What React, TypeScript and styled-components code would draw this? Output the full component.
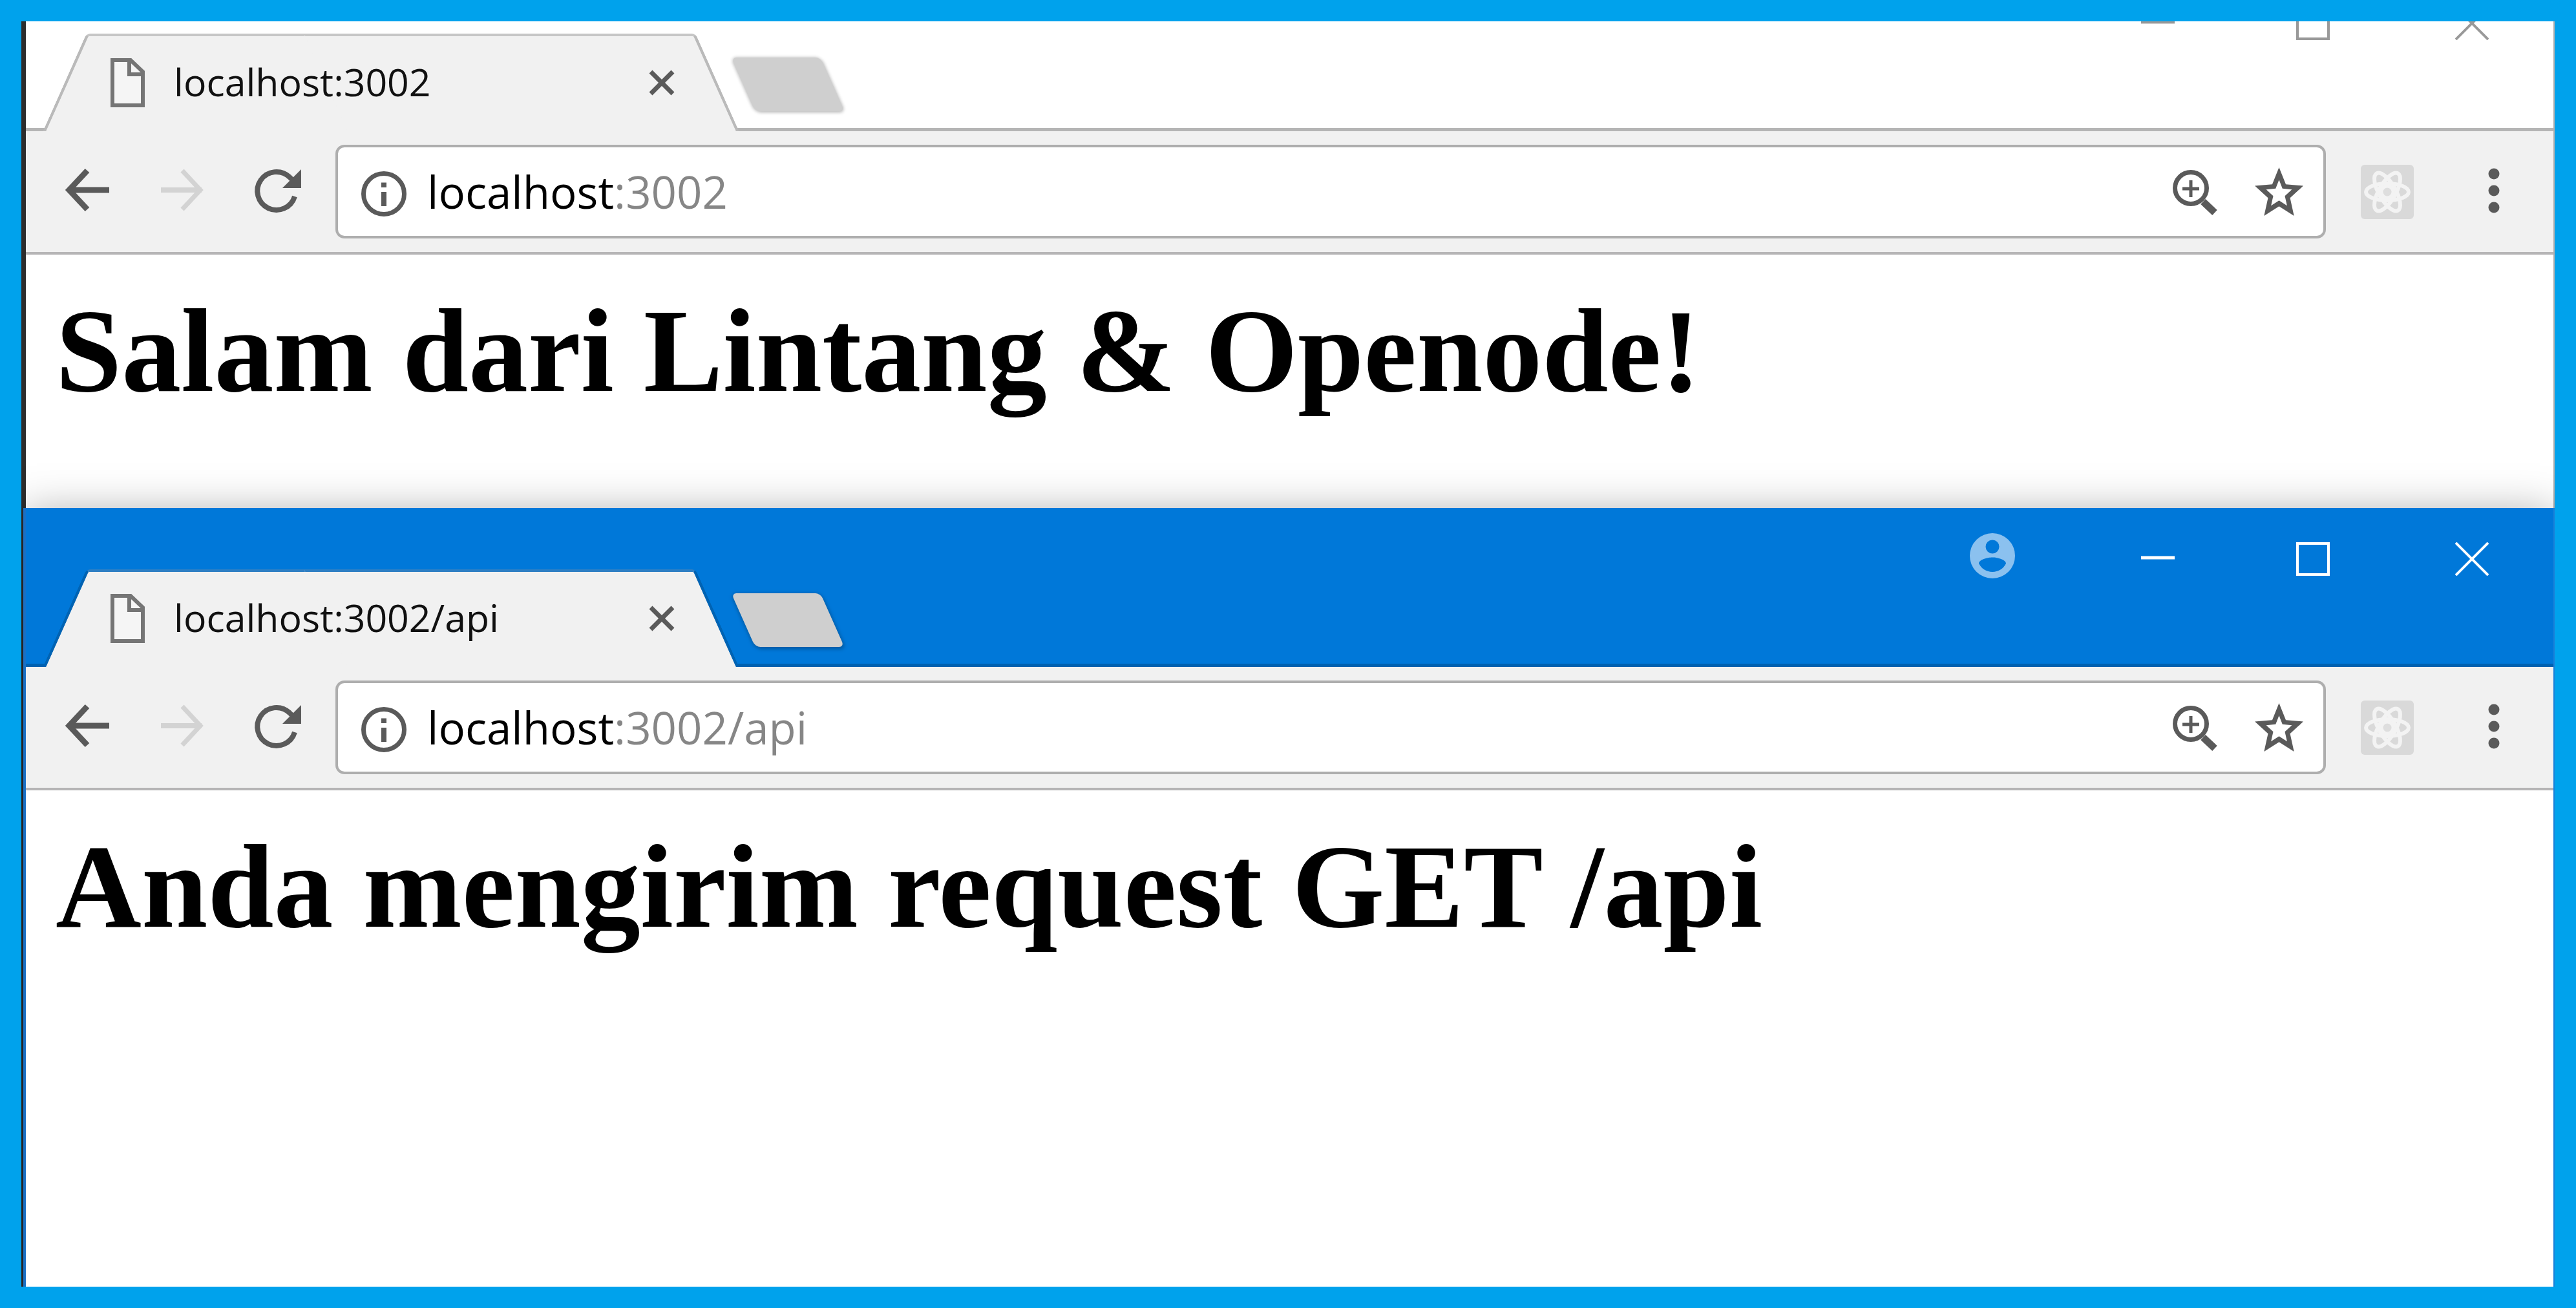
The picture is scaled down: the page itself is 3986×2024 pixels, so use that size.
import React from "react";
import styled, { createGlobalStyle, css } from "styled-components";

type Theme = {
  bar: string;
  line: string;
  tabEdge: string;
  tabTop: string;
  control: string;
  plusShadow: string;
};

const inactive: Theme = {
  bar: "#ffffff",
  line: "#b5b5b5",
  tabEdge: "#bababa",
  tabTop: "#c6c6c6",
  control: "#999999",
  plusShadow: "0 1px 5px 1px #b8b8b8",
};

const active: Theme = {
  bar: "#0078d9",
  line: "#0061b0",
  tabEdge: "#0063b3",
  tabTop: "#2f7fc4",
  control: "#ffffff",
  plusShadow: "0 2px 5px 2px #005ea9",
};

const GlobalStyle = createGlobalStyle`
  *, *::before, *::after { box-sizing: border-box; }
  body { margin: 0; background: #00a2ec; }
  button, input { font: inherit; border: 0; margin: 0; padding: 0; background: none; }
  svg { display: block; flex: none; }
`;

const Frame = styled.div`
  display: flex;
  flex-direction: column;
  min-height: 100vh;
  border: 33px solid #00a2ec;
  padding-left: 7px;
  overflow: hidden;
  background: #2d2d2d;
  font-family: "Open Sans", "Noto Sans", sans-serif;
`;

const Window = styled.section<{ $front?: boolean }>`
  background: #ffffff;
  ${({ $front }) =>
    $front
      ? css`
          flex: 1;
          position: relative;
          margin-left: -4px;
          border-left: 4px solid #1a70c4;
          border-right: 2px solid #1a80d8;
          box-shadow: 0 8px 64px rgba(0, 0, 0, 0.34);
        `
      : css`
          margin-top: -76px;
          border-right: 2px solid #b0b0b0;
        `}
`;

const TitleBar = styled.header<{ $t: Theme }>`
  display: flex;
  align-items: flex-end;
  height: 246px;
  padding-left: 60px;
  background: ${({ $t }) => $t.bar};
  border-bottom: 5px solid ${({ $t }) => $t.line};
`;

const Tab = styled.div<{ $t: Theme }>`
  position: relative;
  isolation: isolate;
  display: flex;
  align-items: center;
  width: 1010px;
  height: 151px;
  margin-bottom: -5px;
  padding: 0 66px 0 71px;
  &::before,
  &::after {
    content: "";
    position: absolute;
    z-index: -1;
    top: 0;
    bottom: 0;
    width: 60%;
    background: #f1f1f1;
    border: 0 solid ${({ $t }) => $t.tabEdge};
    border-top: 4px solid ${({ $t }) => $t.tabTop};
  }
  &::before {
    left: 0;
    border-left-width: 5px;
    border-top-left-radius: 6px;
    transform: skewX(-24deg);
  }
  &::after {
    right: 0;
    border-right-width: 5px;
    border-top-right-radius: 6px;
    transform: skewX(24deg);
  }
`;

const TabLabel = styled.span`
  flex: 1;
  padding: 0 0 4px 44px;
  font-size: 59px;
  line-height: 80px;
  color: #111111;
  white-space: nowrap;
`;

const NewTab = styled.button<{ $t: Theme }>`
  width: 138px;
  height: 83px;
  margin: 0 0 26px 40px;
  border-radius: 8px;
  background: #cfcfcf;
  box-shadow: ${({ $t }) => $t.plusShadow};
  transform: skewX(24deg);
`;

const Controls = styled.div<{ $t: Theme }>`
  display: grid;
  grid-template-columns: 272px 240px 240px 252px;
  align-self: flex-start;
  height: 158px;
  margin-left: auto;
  color: ${({ $t }) => $t.control};
`;

const IconButton = styled.button<{ $dim?: boolean }>`
  display: grid;
  place-items: center;
  color: ${({ $dim }) => ($dim ? "#d3d3d3" : "#5a5a5a")};
`;

const ControlButton = styled(IconButton)`
  color: inherit;
`;

const Toolbar = styled.nav`
  display: flex;
  align-items: stretch;
  height: 191px;
  padding: 21px 52px 21px 22px;
  background: #f1f1f1;
  border-bottom: 4px solid #b6b5b6;
`;

const NavGroup = styled.div`
  display: grid;
  grid-template-columns: repeat(3, 146px);
  margin-right: 19px;
`;

const AddressBar = styled.div`
  flex: 1;
  display: flex;
  align-items: center;
  padding: 0 31px 0 36px;
  border: 4px solid #aeaeae;
  border-radius: 14px;
  background: #ffffff;
`;

const AddressInput = styled.input`
  flex: 1;
  min-width: 0;
  height: 100px;
  margin-left: 32px;
  padding-bottom: 2px;
  font-size: 69px;
  line-height: 98px;
  color: #333333;
  outline: 0;
  background: linear-gradient(to right, #000000 289px, #868686 289px);
  background-clip: text;
  -webkit-background-clip: text;
  -webkit-text-fill-color: transparent;
`;

const AddressActions = styled.div`
  display: flex;
  align-items: center;
  gap: 57px;
`;

const Extensions = styled.div`
  display: flex;
  align-items: center;
  gap: 84px;
  margin-left: 54px;
`;

const Page = styled.main`
  padding: 44px 46px 138px;
`;

const Heading = styled.h1`
  margin: 0;
  font: bold 184px/210px "Liberation Serif", "Times New Roman", serif;
  color: #000000;
`;

const DocIcon = () => (
  <svg width="54" height="76" viewBox="0 0 54 76" fill="none" stroke="#757575" strokeWidth="6">
    <path d="M3 3H31L50 21V73H3Z" fill="#f5f5f5" />
    <path d="M29 3V25H50" />
  </svg>
);

const TabClose = () => (
  <svg width="40" height="40" viewBox="0 0 40 40" stroke="#5a5a5a" strokeWidth="7">
    <path d="M3 3L37 37M37 3L3 37" />
  </svg>
);

const BackIcon = () => (
  <svg width="80" height="80" viewBox="0 0 80 80" fill="none" stroke="currentColor">
    <path d="M11 37H74" strokeWidth="9" />
    <path d="M40 7L12 37L40 67" strokeWidth="9" />
  </svg>
);

const ForwardIcon = () => (
  <svg width="80" height="80" viewBox="0 0 80 80" fill="none" stroke="currentColor">
    <path d="M8 37H71" strokeWidth="8" />
    <path d="M41 7L69 37L41 67" strokeWidth="7" />
  </svg>
);

const ReloadIcon = () => (
  <svg width="80" height="80" viewBox="0 0 80 80" fill="none">
    <path d="M69 47A29.500 29.500 0 1 1 61 17L66 22" stroke="currentColor" strokeWidth="8" />
    <path d="M79 5V34H50Z" fill="currentColor" />
  </svg>
);

const InfoIcon = () => (
  <svg width="70" height="78" viewBox="0 0 70 78" fill="none" stroke="#5a5a5a">
    <circle cx="35" cy="42" r="31.500" strokeWidth="7" />
    <path d="M35 24.500V32M35 39V61" strokeWidth="8" />
  </svg>
);

const ZoomIcon = () => (
  <svg width="70" height="72" viewBox="0 0 70 72" fill="none" stroke="currentColor">
    <circle cx="28" cy="30" r="24.500" strokeWidth="7" />
    <path d="M15 31H41M28 18V44" strokeWidth="5" />
    <path d="M47 51L65 68" strokeWidth="11" />
  </svg>
);

const StarIcon = () => (
  <svg width="75" height="75" viewBox="2 2 20 19" preserveAspectRatio="none" fill="currentColor">
    <path
      fillRule="evenodd"
      d="M22 9.240l-7.190-.62L12 2 9.190 8.630 2 9.240l5.460 4.730L5.820 21 12 17.270 18.180 21l-1.630-7.030L22 9.240zM12 15L8.700 17l.9-3.800-2.900-2.550 3.900-.33L12 6.900l1.400 3.420 3.900.33-2.900 2.550.9 3.800z"
    />
  </svg>
);

const ReactIcon = () => (
  <svg width="82" height="84" viewBox="0 0 82 84" fill="none" stroke="#f3f3f3">
    <rect width="82" height="84" rx="6" fill="#d9d9d9" stroke="none" />
    <g strokeWidth="6">
      <ellipse cx="41" cy="42" rx="33" ry="13" />
      <ellipse cx="41" cy="42" rx="33" ry="13" transform="rotate(60 41 42)" />
      <ellipse cx="41" cy="42" rx="33" ry="13" transform="rotate(120 41 42)" />
    </g>
    <circle cx="41" cy="42" r="9" fill="#dedede" strokeWidth="5" />
  </svg>
);

const MenuIcon = () => (
  <svg width="80" height="80" viewBox="0 0 80 80" fill="currentColor">
    <circle cx="40" cy="12" r="8.500" />
    <circle cx="40" cy="38" r="8.500" />
    <circle cx="40" cy="64" r="8.500" />
  </svg>
);

const AvatarIcon = () => (
  <svg width="80" height="80" viewBox="0 0 80 80" fill="#8bc1ef">
    <path
      fillRule="evenodd"
      d="M40 0a35 35 0 1 0 0 70a35 35 0 1 0 0-70ZM40 10.500a10.500 10.500 0 1 1 0 21a10.500 10.500 0 1 1 0-21ZM19 47C19 41 32 37.500 40 37.500S61 41 61 47C57 55 49 60 40 60S23 55 19 47Z"
    />
  </svg>
);

const MinimiseIcon = () => (
  <svg width="52" height="52" viewBox="0 0 52 52" stroke="currentColor" strokeWidth="5">
    <path d="M0 24H52" />
  </svg>
);

const MaximiseIcon = () => (
  <svg width="52" height="52" viewBox="0 0 52 52" fill="none" stroke="currentColor" strokeWidth="4">
    <rect x="2" y="2" width="48" height="48" />
  </svg>
);

const CloseIcon = () => (
  <svg width="52" height="52" viewBox="0 0 52 52" stroke="currentColor" strokeWidth="4">
    <path d="M1 1L51 51M51 1L1 51" />
  </svg>
);

type BrowserProps = { front?: boolean; url: string; children: React.ReactNode };

function Browser({ front, url, children }: BrowserProps) {
  const t = front ? active : inactive;
  return (
    <Window $front={front}>
      <TitleBar $t={t}>
        <Tab $t={t}>
          <DocIcon />
          <TabLabel>{url}</TabLabel>
          <IconButton aria-label="Close tab">
            <TabClose />
          </IconButton>
        </Tab>
        <NewTab $t={t} aria-label="New tab" />
        <Controls $t={t}>
          {front ? (
            <ControlButton aria-label="Profile">
              <AvatarIcon />
            </ControlButton>
          ) : (
            <span />
          )}
          <ControlButton aria-label="Minimise">
            <MinimiseIcon />
          </ControlButton>
          <ControlButton aria-label="Maximise">
            <MaximiseIcon />
          </ControlButton>
          <ControlButton aria-label="Close window">
            <CloseIcon />
          </ControlButton>
        </Controls>
      </TitleBar>
      <Toolbar>
        <NavGroup>
          <IconButton aria-label="Back">
            <BackIcon />
          </IconButton>
          <IconButton $dim aria-label="Forward">
            <ForwardIcon />
          </IconButton>
          <IconButton aria-label="Reload">
            <ReloadIcon />
          </IconButton>
        </NavGroup>
        <AddressBar>
          <InfoIcon />
          <AddressInput aria-label="Address" type="text" spellCheck={false} defaultValue={url} />
          <AddressActions>
            <IconButton aria-label="Zoom">
              <ZoomIcon />
            </IconButton>
            <IconButton aria-label="Bookmark">
              <StarIcon />
            </IconButton>
          </AddressActions>
        </AddressBar>
        <Extensions>
          <IconButton aria-label="React developer tools">
            <ReactIcon />
          </IconButton>
          <IconButton aria-label="Menu">
            <MenuIcon />
          </IconButton>
        </Extensions>
      </Toolbar>
      <Page>{children}</Page>
    </Window>
  );
}

export default function App() {
  return (
    <>
      <GlobalStyle />
      <Frame>
        <Browser url="localhost:3002">
          <Heading>Salam dari Lintang &amp; Openode!</Heading>
        </Browser>
        <Browser front url="localhost:3002/api">
          <Heading>Anda mengirim request GET /api</Heading>
        </Browser>
      </Frame>
    </>
  );
}
